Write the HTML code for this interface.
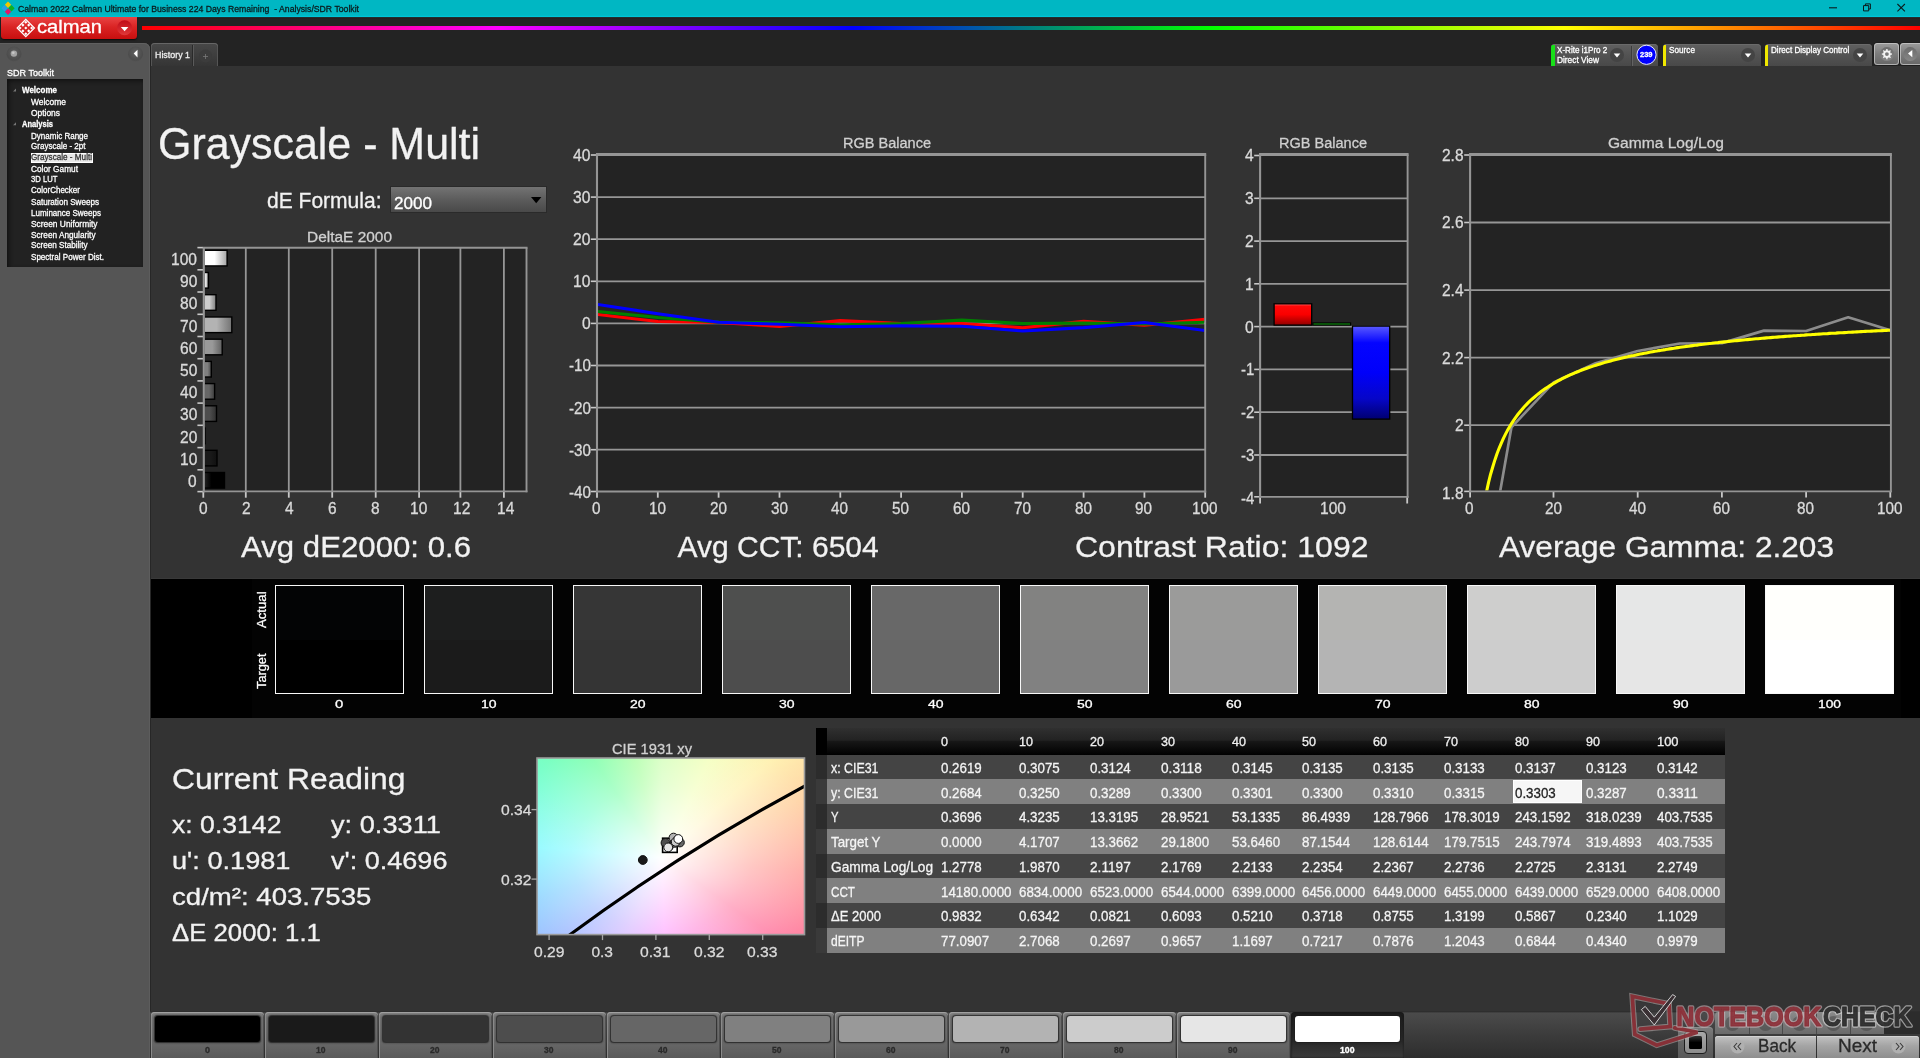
<!DOCTYPE html>
<html><head><meta charset="utf-8"><title>Calman - Grayscale Multi</title>
<style>
html,body{margin:0;padding:0;}
body{width:1920px;height:1058px;overflow:hidden;background:#232323;font-family:"Liberation Sans",sans-serif;position:relative;}
.t{position:absolute;white-space:pre;transform-origin:0 0;-webkit-text-stroke:0.3px currentColor;}
.a{position:absolute;}
svg{position:absolute;left:0;top:0;overflow:visible;}
#root{position:absolute;left:0;top:0;width:1920px;height:1058px;will-change:transform;}
</style></head><body><div id="root">
<div class="a" style="left:0;top:0;width:1920px;height:17px;background:linear-gradient(#00b7c3 0,#00b7c3 15.4px,#00c8da 16px,#00c4d6 16.6px,#0a8c98 17px);"></div>
<div class="a" style="left:0;top:17px;width:1920px;height:2px;background:linear-gradient(#1c3a3c,#291a1a 60%,#232323);"></div>
<svg width="16" height="17" viewBox="0 0 16 17">
<path d="M8 1.5 L11.2 4.7 L8 7.9 L4.8 4.7Z" fill="#f0c800"/>
<path d="M11.5 5 L14.7 8.2 L11.5 11.4 L8.3 8.2Z" fill="#10b020"/>
<path d="M4.5 5 L7.7 8.2 L4.5 11.4 L1.3 8.2Z" fill="#28a0e8"/>
<path d="M8 8.5 L11.2 11.7 L8 14.9 L4.8 11.7Z" fill="#e01868"/>
</svg>
<div class="t" style="left:18.00px;top:3.96px;font-size:9.5px;line-height:9.5px;color:#0a1a1c;transform:scaleX(0.9139);">Calman 2022 Calman Ultimate for Business 224 Days Remaining  - Analysis/SDR Toolkit</div>
<svg width="1920" height="17">
<path d="M1829 7.8 H1837" stroke="#0a1a1c" stroke-width="1.1" fill="none"/>
<path d="M1863.5 5.6 H1868.7 V10.9 H1863.5Z M1865.4 5.6 V3.9 H1870.4 V9 H1868.7" stroke="#0a1a1c" stroke-width="1" fill="none"/>
<path d="M1897.4 4 L1904.9 11.3 M1904.9 4 L1897.4 11.3" stroke="#0a1a1c" stroke-width="1.05" fill="none"/>
</svg>
<div class="a" style="left:1px;top:17px;width:136px;height:22px;border-radius:0 0 3.5px 3.5px;background:linear-gradient(#e84444,#da2424 45%,#c80f0f);box-shadow:0 1px 1.5px #0c0c0c;"></div>
<svg width="140" height="42">
<path d="M25.8 19.4 L34.4 28.0 L25.8 36.6 L17.200000000000003 28.0Z" fill="none" stroke="#fff" stroke-width="1.3" stroke-linejoin="miter"/>
<g fill="#fff">
<path d="M25.80 20.65 L27.35 22.20 L25.80 23.75 L24.25 22.20Z"/>
<path d="M22.90 23.55 L24.45 25.10 L22.90 26.65 L21.35 25.10Z"/>
<path d="M20.00 26.45 L21.55 28.00 L20.00 29.55 L18.45 28.00Z"/>
<path d="M28.70 23.55 L30.25 25.10 L28.70 26.65 L27.15 25.10Z"/>
<path d="M25.80 26.45 L27.35 28.00 L25.80 29.55 L24.25 28.00Z"/>
<path d="M22.90 29.35 L24.45 30.90 L22.90 32.45 L21.35 30.90Z"/>
<path d="M31.60 26.45 L33.15 28.00 L31.60 29.55 L30.05 28.00Z"/>
<path d="M28.70 29.35 L30.25 30.90 L28.70 32.45 L27.15 30.90Z"/>
<path d="M25.80 32.25 L27.35 33.80 L25.80 35.35 L24.25 33.80Z"/>
</g>
<defs><linearGradient id="rdd" x1="0" x2="0" y1="0" y2="1"><stop offset="0" stop-color="#c00c18"/><stop offset="1" stop-color="#e03838"/></linearGradient></defs><circle cx="124.6" cy="27.8" r="7.5" fill="url(#rdd)"/>
<path d="M120.8 26.9 H128.4 L124.6 31.2Z" fill="#fff"/>
</svg>
<div class="t" style="left:37.00px;top:17.61px;font-size:18px;line-height:18px;color:#ffffff;transform:scaleX(1.1202);">calman</div>
<div class="a" style="left:142px;top:26.3px;width:1778px;height:4.1px;background:linear-gradient(90deg,#ff0000 0%,#ff00ff 20%,#0000ff 40%,#00ff00 60%,#ffff00 80%,#ff0000 100%);"></div>
<div class="a" style="left:0;top:43px;width:150px;height:1015px;background:#555555;border-radius:0 6px 0 0;box-shadow:inset -1px 0 0 #5d5d5d, inset 0 1px 0 #606060;"></div>
<svg width="150" height="70">
<defs><radialGradient id="rb" cx="50%" cy="40%" r="60%"><stop offset="0" stop-color="#606060"/><stop offset="0.8" stop-color="#4c4c4c"/><stop offset="1" stop-color="#545454"/></radialGradient></defs>
<circle cx="14" cy="54.2" r="7.6" fill="url(#rb)"/><circle cx="13.9" cy="53.6" r="3.2" fill="#a4a4a4"/><circle cx="13.3" cy="52.8" r="1.3" fill="#c8c8c8"/>
<circle cx="135.6" cy="54.2" r="7.6" fill="url(#rb)"/><path d="M137.5 49.8 V57.4 L133.7 53.6Z" fill="#fff"/>
</svg>
<div class="t" style="left:7.00px;top:67.71px;font-size:9.6px;line-height:9.6px;color:#ffffff;transform:scaleX(0.9405);">SDR Toolkit</div>
<div class="a" style="left:7px;top:79px;width:136px;height:188px;background:#222;box-shadow:inset 2px 2px 4px #111;"></div>
<div class="t" style="left:22.00px;top:85.80px;font-size:9px;line-height:9px;color:#ffffff;font-weight:bold;transform:scaleX(0.8895);">Welcome</div>
<div class="t" style="left:31.00px;top:97.60px;font-size:9px;line-height:9px;color:#ffffff;transform:scaleX(0.9372);">Welcome</div>
<div class="t" style="left:31.00px;top:108.90px;font-size:9px;line-height:9px;color:#ffffff;transform:scaleX(0.9350);">Options</div>
<div class="t" style="left:22.00px;top:119.60px;font-size:9px;line-height:9px;color:#ffffff;font-weight:bold;transform:scaleX(0.8374);">Analysis</div>
<div class="t" style="left:31.00px;top:131.60px;font-size:9px;line-height:9px;color:#ffffff;transform:scaleX(0.8902);">Dynamic Range</div>
<div class="t" style="left:31.00px;top:142.30px;font-size:9px;line-height:9px;color:#ffffff;transform:scaleX(0.8931);">Grayscale - 2pt</div>
<div class="a" style="left:30.5px;top:152.5px;width:62.5px;height:10.5px;background:#e8e8e8;border:0.5px solid #fff;box-sizing:border-box;"></div>
<div class="t" style="left:31.00px;top:153.20px;font-size:9px;line-height:9px;color:#333;transform:scaleX(0.9035);">Grayscale - Multi</div>
<div class="t" style="left:31.00px;top:164.60px;font-size:9px;line-height:9px;color:#ffffff;transform:scaleX(0.9213);">Color Gamut</div>
<div class="t" style="left:31.00px;top:175.30px;font-size:9px;line-height:9px;color:#ffffff;transform:scaleX(0.8546);">3D LUT</div>
<div class="t" style="left:31.00px;top:186.40px;font-size:9px;line-height:9px;color:#ffffff;transform:scaleX(0.8906);">ColorChecker</div>
<div class="t" style="left:31.00px;top:197.60px;font-size:9px;line-height:9px;color:#ffffff;transform:scaleX(0.9001);">Saturation Sweeps</div>
<div class="t" style="left:31.00px;top:208.60px;font-size:9px;line-height:9px;color:#ffffff;transform:scaleX(0.8911);">Luminance Sweeps</div>
<div class="t" style="left:31.00px;top:219.60px;font-size:9px;line-height:9px;color:#ffffff;transform:scaleX(0.9298);">Screen Uniformity</div>
<div class="t" style="left:31.00px;top:230.60px;font-size:9px;line-height:9px;color:#ffffff;transform:scaleX(0.9143);">Screen Angularity</div>
<div class="t" style="left:31.00px;top:241.20px;font-size:9px;line-height:9px;color:#ffffff;transform:scaleX(0.9035);">Screen Stability</div>
<div class="t" style="left:31.00px;top:252.60px;font-size:9px;line-height:9px;color:#ffffff;transform:scaleX(0.8954);">Spectral Power Dist.</div>
<svg width="150" height="140"><path d="M16 88.5 V91.5 H13Z M16 122.3 V125.3 H13Z" fill="#777"/></svg>
<div class="a" style="left:151px;top:43px;width:67px;height:23px;border-radius:4px 4px 0 0;background:linear-gradient(#484848,#353535);box-shadow:inset 0 1px 0 #666, inset 1px 0 0 #555, inset -1px 0 0 #555;"></div>
<div class="a" style="left:193px;top:45px;width:1px;height:21px;background:#5a5a5a;"></div>
<div class="a" style="left:192px;top:45px;width:1px;height:21px;background:#2a2a2a;"></div>
<svg width="230" height="70"><circle cx="205.5" cy="56" r="6.5" fill="#3c3c3c"/><path d="M203 56.5 H208 M205.5 54 V59" stroke="#777" stroke-width="0.8"/></svg>
<div class="t" style="left:154.50px;top:51.06px;font-size:9.3px;line-height:9.3px;color:#f0f0f0;transform:scaleX(0.9539);">History 1</div>
<div class="a" style="left:150px;top:66px;width:1770px;height:992px;background:#333333;box-shadow:inset 1px 0 0 #272727;"></div>
<div class="t" style="left:158.00px;top:120.92px;font-size:45px;line-height:45px;color:#f2f2f2;transform:scaleX(0.9539);">Grayscale - Multi</div>
<div class="t" style="left:266.60px;top:190.70px;font-size:21.5px;line-height:21.5px;color:#f2f2f2;transform:scaleX(0.9778);">dE Formula:</div>
<div class="a" style="left:390.6px;top:186.9px;width:155.6px;height:25.5px;background:linear-gradient(#737373,#5c5c5c 50%,#494949);box-shadow:0 0 0 1px #2a2a2a;"></div>
<div class="t" style="left:394.30px;top:195.58px;font-size:16px;line-height:16px;color:#ffffff;transform:scaleX(1.0676);">2000</div>
<svg width="560" height="220"><path d="M531 197 H541.4 L536.2 203.3Z" fill="#000"/></svg>
<div class="t" style="left:306.50px;top:229.03px;font-size:15.5px;line-height:15.5px;color:#d0d0d0;transform:scaleX(0.9963);">DeltaE 2000</div>
<div class="t" style="left:198.50px;top:500.83px;font-size:15.7px;line-height:15.7px;color:#dadada;transform:scaleX(0.9849);">0</div>
<div class="t" style="left:241.70px;top:500.83px;font-size:15.7px;line-height:15.7px;color:#dadada;transform:scaleX(0.9849);">2</div>
<div class="t" style="left:284.90px;top:500.83px;font-size:15.7px;line-height:15.7px;color:#dadada;transform:scaleX(0.9849);">4</div>
<div class="t" style="left:328.10px;top:500.83px;font-size:15.7px;line-height:15.7px;color:#dadada;transform:scaleX(0.9849);">6</div>
<div class="t" style="left:371.30px;top:500.83px;font-size:15.7px;line-height:15.7px;color:#dadada;transform:scaleX(0.9849);">8</div>
<div class="t" style="left:410.15px;top:500.83px;font-size:15.7px;line-height:15.7px;color:#dadada;transform:scaleX(0.9906);">10</div>
<div class="t" style="left:453.35px;top:500.83px;font-size:15.7px;line-height:15.7px;color:#dadada;transform:scaleX(0.9906);">12</div>
<div class="t" style="left:496.55px;top:500.83px;font-size:15.7px;line-height:15.7px;color:#dadada;transform:scaleX(0.9906);">14</div>
<div class="t" style="left:171.00px;top:251.94px;font-size:15.7px;line-height:15.7px;color:#dadada;transform:scaleX(0.9925);">100</div>
<div class="t" style="left:179.70px;top:274.16px;font-size:15.7px;line-height:15.7px;color:#dadada;transform:scaleX(0.9906);">90</div>
<div class="t" style="left:179.70px;top:296.38px;font-size:15.7px;line-height:15.7px;color:#dadada;transform:scaleX(0.9906);">80</div>
<div class="t" style="left:179.70px;top:318.59px;font-size:15.7px;line-height:15.7px;color:#dadada;transform:scaleX(0.9906);">70</div>
<div class="t" style="left:179.70px;top:340.81px;font-size:15.7px;line-height:15.7px;color:#dadada;transform:scaleX(0.9906);">60</div>
<div class="t" style="left:179.70px;top:363.03px;font-size:15.7px;line-height:15.7px;color:#dadada;transform:scaleX(0.9906);">50</div>
<div class="t" style="left:179.70px;top:385.25px;font-size:15.7px;line-height:15.7px;color:#dadada;transform:scaleX(0.9906);">40</div>
<div class="t" style="left:179.70px;top:407.47px;font-size:15.7px;line-height:15.7px;color:#dadada;transform:scaleX(0.9906);">30</div>
<div class="t" style="left:179.70px;top:429.69px;font-size:15.7px;line-height:15.7px;color:#dadada;transform:scaleX(0.9906);">20</div>
<div class="t" style="left:179.70px;top:451.90px;font-size:15.7px;line-height:15.7px;color:#dadada;transform:scaleX(0.9906);">10</div>
<div class="t" style="left:188.40px;top:474.12px;font-size:15.7px;line-height:15.7px;color:#dadada;transform:scaleX(0.9849);">0</div>
<div class="t" style="left:842.50px;top:135.43px;font-size:15.5px;line-height:15.5px;color:#d0d0d0;transform:scaleX(0.9371);">RGB Balance</div>
<div class="t" style="left:573.30px;top:147.93px;font-size:15.7px;line-height:15.7px;color:#dadada;transform:scaleX(0.9963);">40</div>
<div class="t" style="left:573.30px;top:190.03px;font-size:15.7px;line-height:15.7px;color:#dadada;transform:scaleX(0.9963);">30</div>
<div class="t" style="left:573.30px;top:232.13px;font-size:15.7px;line-height:15.7px;color:#dadada;transform:scaleX(0.9963);">20</div>
<div class="t" style="left:573.30px;top:274.23px;font-size:15.7px;line-height:15.7px;color:#dadada;transform:scaleX(0.9963);">10</div>
<div class="t" style="left:582.00px;top:316.33px;font-size:15.7px;line-height:15.7px;color:#dadada;transform:scaleX(0.9963);">0</div>
<div class="t" style="left:568.70px;top:358.43px;font-size:15.7px;line-height:15.7px;color:#dadada;transform:scaleX(0.9695);">-10</div>
<div class="t" style="left:568.70px;top:400.53px;font-size:15.7px;line-height:15.7px;color:#dadada;transform:scaleX(0.9695);">-20</div>
<div class="t" style="left:568.70px;top:442.63px;font-size:15.7px;line-height:15.7px;color:#dadada;transform:scaleX(0.9695);">-30</div>
<div class="t" style="left:568.70px;top:484.73px;font-size:15.7px;line-height:15.7px;color:#dadada;transform:scaleX(0.9695);">-40</div>
<div class="t" style="left:592.35px;top:500.83px;font-size:15.7px;line-height:15.7px;color:#dadada;transform:scaleX(0.9734);">0</div>
<div class="t" style="left:648.92px;top:500.83px;font-size:15.7px;line-height:15.7px;color:#dadada;transform:scaleX(0.9734);">10</div>
<div class="t" style="left:709.74px;top:500.83px;font-size:15.7px;line-height:15.7px;color:#dadada;transform:scaleX(0.9734);">20</div>
<div class="t" style="left:770.56px;top:500.83px;font-size:15.7px;line-height:15.7px;color:#dadada;transform:scaleX(0.9734);">30</div>
<div class="t" style="left:831.38px;top:500.83px;font-size:15.7px;line-height:15.7px;color:#dadada;transform:scaleX(0.9734);">40</div>
<div class="t" style="left:892.20px;top:500.83px;font-size:15.7px;line-height:15.7px;color:#dadada;transform:scaleX(0.9734);">50</div>
<div class="t" style="left:953.02px;top:500.83px;font-size:15.7px;line-height:15.7px;color:#dadada;transform:scaleX(0.9734);">60</div>
<div class="t" style="left:1013.84px;top:500.83px;font-size:15.7px;line-height:15.7px;color:#dadada;transform:scaleX(0.9734);">70</div>
<div class="t" style="left:1074.66px;top:500.83px;font-size:15.7px;line-height:15.7px;color:#dadada;transform:scaleX(0.9734);">80</div>
<div class="t" style="left:1135.48px;top:500.83px;font-size:15.7px;line-height:15.7px;color:#dadada;transform:scaleX(0.9734);">90</div>
<div class="t" style="left:1192.05px;top:500.83px;font-size:15.7px;line-height:15.7px;color:#dadada;transform:scaleX(0.9734);">100</div>
<div class="t" style="left:1279.00px;top:135.43px;font-size:15.5px;line-height:15.5px;color:#d0d0d0;transform:scaleX(0.9371);">RGB Balance</div>
<div class="t" style="left:1245.10px;top:148.43px;font-size:15.7px;line-height:15.7px;color:#dadada;transform:scaleX(0.9963);">4</div>
<div class="t" style="left:1245.10px;top:191.21px;font-size:15.7px;line-height:15.7px;color:#dadada;transform:scaleX(0.9963);">3</div>
<div class="t" style="left:1245.10px;top:233.99px;font-size:15.7px;line-height:15.7px;color:#dadada;transform:scaleX(0.9963);">2</div>
<div class="t" style="left:1245.10px;top:276.77px;font-size:15.7px;line-height:15.7px;color:#dadada;transform:scaleX(0.9963);">1</div>
<div class="t" style="left:1245.10px;top:319.55px;font-size:15.7px;line-height:15.7px;color:#dadada;transform:scaleX(0.9963);">0</div>
<div class="t" style="left:1240.50px;top:362.33px;font-size:15.7px;line-height:15.7px;color:#dadada;transform:scaleX(0.9527);">-1</div>
<div class="t" style="left:1240.50px;top:405.11px;font-size:15.7px;line-height:15.7px;color:#dadada;transform:scaleX(0.9527);">-2</div>
<div class="t" style="left:1240.50px;top:447.89px;font-size:15.7px;line-height:15.7px;color:#dadada;transform:scaleX(0.9527);">-3</div>
<div class="t" style="left:1240.50px;top:490.67px;font-size:15.7px;line-height:15.7px;color:#dadada;transform:scaleX(0.9527);">-4</div>
<div class="t" style="left:1320.00px;top:500.83px;font-size:15.7px;line-height:15.7px;color:#dadada;transform:scaleX(0.9925);">100</div>
<div class="t" style="left:1607.50px;top:135.43px;font-size:15.5px;line-height:15.5px;color:#d0d0d0;transform:scaleX(1.0047);">Gamma Log/Log</div>
<div class="t" style="left:1441.70px;top:147.93px;font-size:15.7px;line-height:15.7px;color:#dadada;transform:scaleX(0.9851);">2.8</div>
<div class="t" style="left:1441.70px;top:215.48px;font-size:15.7px;line-height:15.7px;color:#dadada;transform:scaleX(0.9851);">2.6</div>
<div class="t" style="left:1441.70px;top:283.03px;font-size:15.7px;line-height:15.7px;color:#dadada;transform:scaleX(0.9851);">2.4</div>
<div class="t" style="left:1441.70px;top:350.58px;font-size:15.7px;line-height:15.7px;color:#dadada;transform:scaleX(0.9851);">2.2</div>
<div class="t" style="left:1454.50px;top:418.13px;font-size:15.7px;line-height:15.7px;color:#dadada;transform:scaleX(0.9963);">2</div>
<div class="t" style="left:1441.70px;top:485.68px;font-size:15.7px;line-height:15.7px;color:#dadada;transform:scaleX(0.9851);">1.8</div>
<div class="t" style="left:1464.75px;top:500.83px;font-size:15.7px;line-height:15.7px;color:#dadada;transform:scaleX(0.9734);">0</div>
<div class="t" style="left:1544.70px;top:500.83px;font-size:15.7px;line-height:15.7px;color:#dadada;transform:scaleX(0.9734);">20</div>
<div class="t" style="left:1628.90px;top:500.83px;font-size:15.7px;line-height:15.7px;color:#dadada;transform:scaleX(0.9734);">40</div>
<div class="t" style="left:1713.10px;top:500.83px;font-size:15.7px;line-height:15.7px;color:#dadada;transform:scaleX(0.9734);">60</div>
<div class="t" style="left:1797.30px;top:500.83px;font-size:15.7px;line-height:15.7px;color:#dadada;transform:scaleX(0.9734);">80</div>
<div class="t" style="left:1877.25px;top:500.83px;font-size:15.7px;line-height:15.7px;color:#dadada;transform:scaleX(0.9734);">100</div>
<svg width="1920" height="1058"><rect x="203.8" y="247.7" width="322.7" height="243.7" fill="#232323"/>
<path d="M245.8 247.7 V491.4" stroke="#969696" stroke-width="1.8"/>
<path d="M288.8 247.7 V491.4" stroke="#969696" stroke-width="1.8"/>
<path d="M332.2 247.7 V491.4" stroke="#969696" stroke-width="1.8"/>
<path d="M375.7 247.7 V491.4" stroke="#969696" stroke-width="1.8"/>
<path d="M419.1 247.7 V491.4" stroke="#969696" stroke-width="1.8"/>
<path d="M460.4 247.7 V491.4" stroke="#969696" stroke-width="1.8"/>
<path d="M503.9 247.7 V491.4" stroke="#969696" stroke-width="1.8"/>
<path d="M203.3 491.4 V497.7" stroke="#c8c8c8" stroke-width="1.8"/>
<path d="M245.8 491.4 V497.7" stroke="#c8c8c8" stroke-width="1.8"/>
<path d="M288.8 491.4 V497.7" stroke="#c8c8c8" stroke-width="1.8"/>
<path d="M332.2 491.4 V497.7" stroke="#c8c8c8" stroke-width="1.8"/>
<path d="M375.7 491.4 V497.7" stroke="#c8c8c8" stroke-width="1.8"/>
<path d="M419.1 491.4 V497.7" stroke="#c8c8c8" stroke-width="1.8"/>
<path d="M460.4 491.4 V497.7" stroke="#c8c8c8" stroke-width="1.8"/>
<path d="M503.9 491.4 V497.7" stroke="#c8c8c8" stroke-width="1.8"/>
<defs>
<linearGradient id="bg0" x1="0" x2="1" y1="0" y2="0"><stop offset="0" stop-color="#202020"/><stop offset="0.35" stop-color="#000"/><stop offset="1" stop-color="#000"/></linearGradient>
<linearGradient id="bg10" x1="0" x2="1" y1="0" y2="0"><stop offset="0" stop-color="rgb(26,26,26)"/><stop offset="0.45" stop-color="rgb(26,26,26)"/><stop offset="1" stop-color="rgb(17,17,17)"/></linearGradient>
<linearGradient id="bg20" x1="0" x2="1" y1="0" y2="0"><stop offset="0" stop-color="rgb(51,51,51)"/><stop offset="0.45" stop-color="rgb(51,51,51)"/><stop offset="1" stop-color="rgb(33,33,33)"/></linearGradient>
<linearGradient id="bg30" x1="0" x2="1" y1="0" y2="0"><stop offset="0" stop-color="rgb(77,77,77)"/><stop offset="0.45" stop-color="rgb(77,77,77)"/><stop offset="1" stop-color="rgb(50,50,50)"/></linearGradient>
<linearGradient id="bg40" x1="0" x2="1" y1="0" y2="0"><stop offset="0" stop-color="rgb(102,102,102)"/><stop offset="0.45" stop-color="rgb(102,102,102)"/><stop offset="1" stop-color="rgb(67,67,67)"/></linearGradient>
<linearGradient id="bg50" x1="0" x2="1" y1="0" y2="0"><stop offset="0" stop-color="rgb(128,128,128)"/><stop offset="0.45" stop-color="rgb(128,128,128)"/><stop offset="1" stop-color="rgb(84,84,84)"/></linearGradient>
<linearGradient id="bg60" x1="0" x2="1" y1="0" y2="0"><stop offset="0" stop-color="rgb(153,153,153)"/><stop offset="0.45" stop-color="rgb(153,153,153)"/><stop offset="1" stop-color="rgb(100,100,100)"/></linearGradient>
<linearGradient id="bg70" x1="0" x2="1" y1="0" y2="0"><stop offset="0" stop-color="rgb(179,179,179)"/><stop offset="0.45" stop-color="rgb(179,179,179)"/><stop offset="1" stop-color="rgb(118,118,118)"/></linearGradient>
<linearGradient id="bg80" x1="0" x2="1" y1="0" y2="0"><stop offset="0" stop-color="rgb(204,204,204)"/><stop offset="0.45" stop-color="rgb(204,204,204)"/><stop offset="1" stop-color="rgb(134,134,134)"/></linearGradient>
<linearGradient id="bg90" x1="0" x2="1" y1="0" y2="0"><stop offset="0" stop-color="rgb(230,230,230)"/><stop offset="0.45" stop-color="rgb(230,230,230)"/><stop offset="1" stop-color="rgb(151,151,151)"/></linearGradient>
<linearGradient id="bg100" x1="0" x2="1" y1="0" y2="0"><stop offset="0" stop-color="rgb(255,255,255)"/><stop offset="0.45" stop-color="rgb(255,255,255)"/><stop offset="1" stop-color="rgb(168,168,168)"/></linearGradient>
</defs>
<path d="M197.4 247.6 H203" stroke="#c8c8c8" stroke-width="1.6"/>
<rect x="204.8" y="249.6" width="23.0" height="17" fill="#000"/>
<rect x="204.8" y="251.0" width="21.6" height="14.2" fill="url(#bg100)"/>
<path d="M197.4 269.8 H203" stroke="#c8c8c8" stroke-width="1.6"/>
<rect x="204.8" y="271.8" width="4.3" height="17" fill="#000"/>
<rect x="204.8" y="273.2" width="2.9" height="14.2" fill="url(#bg90)"/>
<path d="M197.4 292.0 H203" stroke="#c8c8c8" stroke-width="1.6"/>
<rect x="204.8" y="294.0" width="11.9" height="17" fill="#000"/>
<rect x="204.8" y="295.4" width="10.5" height="14.2" fill="url(#bg80)"/>
<path d="M197.4 314.3 H203" stroke="#c8c8c8" stroke-width="1.6"/>
<rect x="204.8" y="316.3" width="27.7" height="17" fill="#000"/>
<rect x="204.8" y="317.7" width="26.3" height="14.2" fill="url(#bg70)"/>
<path d="M197.4 336.5 H203" stroke="#c8c8c8" stroke-width="1.6"/>
<rect x="204.8" y="338.5" width="18.1" height="17" fill="#000"/>
<rect x="204.8" y="339.9" width="16.7" height="14.2" fill="url(#bg60)"/>
<path d="M197.4 358.7 H203" stroke="#c8c8c8" stroke-width="1.6"/>
<rect x="204.8" y="360.7" width="7.2" height="17" fill="#000"/>
<rect x="204.8" y="362.1" width="5.8" height="14.2" fill="url(#bg50)"/>
<path d="M197.4 380.9 H203" stroke="#c8c8c8" stroke-width="1.6"/>
<rect x="204.8" y="382.9" width="10.5" height="17" fill="#000"/>
<rect x="204.8" y="384.3" width="9.1" height="14.2" fill="url(#bg40)"/>
<path d="M197.4 403.1 H203" stroke="#c8c8c8" stroke-width="1.6"/>
<rect x="204.8" y="405.1" width="12.4" height="17" fill="#000"/>
<rect x="204.8" y="406.5" width="11.0" height="14.2" fill="url(#bg30)"/>
<path d="M197.4 425.3 H203" stroke="#c8c8c8" stroke-width="1.6"/>
<rect x="204.8" y="427.4" width="1.0" height="17" fill="#000"/>
<rect x="204.8" y="428.8" width="0.3" height="14.2" fill="url(#bg20)"/>
<path d="M197.4 447.6 H203" stroke="#c8c8c8" stroke-width="1.6"/>
<rect x="204.8" y="449.6" width="12.9" height="17" fill="#000"/>
<rect x="204.8" y="451.0" width="11.5" height="14.2" fill="url(#bg10)"/>
<path d="M197.4 469.8 H203" stroke="#c8c8c8" stroke-width="1.6"/>
<rect x="204.8" y="471.8" width="20.4" height="17" fill="#000"/>
<rect x="204.8" y="473.2" width="19.0" height="14.2" fill="url(#bg0)"/>
<path d="M197.4 491.6 H203" stroke="#c8c8c8" stroke-width="1.6"/>
<path d="M203.8 247.70 V492.29999999999995" stroke="#959595" stroke-width="2.1"/>
<path d="M202.75 247.7 H527.5" stroke="#959595" stroke-width="2.0"/>
<path d="M526.5 247.7 V492.29999999999995" stroke="#959595" stroke-width="1.9"/>
<path d="M202.75 491.4 H527.45" stroke="#959595" stroke-width="1.8"/>
<rect x="597.0" y="154.6" width="608.2" height="336.9" fill="#232323"/>
<path d="M590.8 155.0 H597.0" stroke="#c8c8c8" stroke-width="1.6"/>
<path d="M597.0 197.1 H1205.2" stroke="#969696" stroke-width="1.8"/>
<path d="M590.8 197.1 H597.0" stroke="#c8c8c8" stroke-width="1.6"/>
<path d="M597.0 239.2 H1205.2" stroke="#969696" stroke-width="1.8"/>
<path d="M590.8 239.2 H597.0" stroke="#c8c8c8" stroke-width="1.6"/>
<path d="M597.0 281.3 H1205.2" stroke="#969696" stroke-width="1.8"/>
<path d="M590.8 281.3 H597.0" stroke="#c8c8c8" stroke-width="1.6"/>
<path d="M597.0 323.4 H1205.2" stroke="#969696" stroke-width="1.8"/>
<path d="M590.8 323.4 H597.0" stroke="#c8c8c8" stroke-width="1.6"/>
<path d="M597.0 365.5 H1205.2" stroke="#969696" stroke-width="1.8"/>
<path d="M590.8 365.5 H597.0" stroke="#c8c8c8" stroke-width="1.6"/>
<path d="M597.0 407.6 H1205.2" stroke="#969696" stroke-width="1.8"/>
<path d="M590.8 407.6 H597.0" stroke="#c8c8c8" stroke-width="1.6"/>
<path d="M597.0 449.7 H1205.2" stroke="#969696" stroke-width="1.8"/>
<path d="M590.8 449.7 H597.0" stroke="#c8c8c8" stroke-width="1.6"/>
<path d="M590.8 491.5 H597.0" stroke="#c8c8c8" stroke-width="1.6"/>
<path d="M597.0 491.5 V497.7" stroke="#c8c8c8" stroke-width="1.8"/>
<path d="M657.8 491.5 V497.7" stroke="#c8c8c8" stroke-width="1.8"/>
<path d="M718.6 491.5 V497.7" stroke="#c8c8c8" stroke-width="1.8"/>
<path d="M779.5 491.5 V497.7" stroke="#c8c8c8" stroke-width="1.8"/>
<path d="M840.3 491.5 V497.7" stroke="#c8c8c8" stroke-width="1.8"/>
<path d="M901.1 491.5 V497.7" stroke="#c8c8c8" stroke-width="1.8"/>
<path d="M961.9 491.5 V497.7" stroke="#c8c8c8" stroke-width="1.8"/>
<path d="M1022.7 491.5 V497.7" stroke="#c8c8c8" stroke-width="1.8"/>
<path d="M1083.6 491.5 V497.7" stroke="#c8c8c8" stroke-width="1.8"/>
<path d="M1144.4 491.5 V497.7" stroke="#c8c8c8" stroke-width="1.8"/>
<path d="M1205.2 491.5 V497.7" stroke="#c8c8c8" stroke-width="1.8"/>
<clipPath id="cp2"><rect x="598.0" y="154.6" width="606.3000000000001" height="336.9"/></clipPath>
<polyline points="597.0,314.4 657.8,321.5 718.6,322.5 779.5,326.5 840.3,320.6 901.1,323.5 961.9,323.5 1022.7,327.8 1083.6,321.4 1144.4,325.2 1205.2,319.3" fill="none" stroke="#ff0000" stroke-width="3.1" stroke-linejoin="round" clip-path="url(#cp2)"/>
<polyline points="597.0,311.4 657.8,317.5 718.6,322.1 779.5,322.7 840.3,324.8 901.1,323.5 961.9,320.1 1022.7,323.5 1083.6,323.1 1144.4,324.0 1205.2,322.3" fill="none" stroke="#008000" stroke-width="3.1" stroke-linejoin="round" clip-path="url(#cp2)"/>
<polyline points="597.0,304.3 657.8,313.7 718.6,322.3 779.5,324.2 840.3,326.7 901.1,325.9 961.9,326.3 1022.7,331.0 1083.6,327.6 1144.4,322.5 1205.2,330.5" fill="none" stroke="#0000ff" stroke-width="3.1" stroke-linejoin="round" clip-path="url(#cp2)"/>
<path d="M597.0 154.10 V492.4" stroke="#959595" stroke-width="2.1"/>
<path d="M595.95 154.6 H1206.2" stroke="#959595" stroke-width="3.0"/>
<path d="M1205.2 154.6 V492.4" stroke="#959595" stroke-width="1.9"/>
<path d="M595.95 491.5 H1206.15" stroke="#959595" stroke-width="1.8"/>
<rect x="1260.1" y="154.6" width="147.5" height="342.20000000000005" fill="#232323"/>
<path d="M1254.2 155.5 H1260.1" stroke="#c8c8c8" stroke-width="1.6"/>
<path d="M1260.1 198.3 H1407.6" stroke="#969696" stroke-width="1.8"/>
<path d="M1254.2 198.3 H1260.1" stroke="#c8c8c8" stroke-width="1.6"/>
<path d="M1260.1 241.1 H1407.6" stroke="#969696" stroke-width="1.8"/>
<path d="M1254.2 241.1 H1260.1" stroke="#c8c8c8" stroke-width="1.6"/>
<path d="M1260.1 283.8 H1407.6" stroke="#969696" stroke-width="1.8"/>
<path d="M1254.2 283.8 H1260.1" stroke="#c8c8c8" stroke-width="1.6"/>
<path d="M1260.1 326.6 H1407.6" stroke="#969696" stroke-width="1.8"/>
<path d="M1254.2 326.6 H1260.1" stroke="#c8c8c8" stroke-width="1.6"/>
<path d="M1260.1 369.4 H1407.6" stroke="#969696" stroke-width="1.8"/>
<path d="M1254.2 369.4 H1260.1" stroke="#c8c8c8" stroke-width="1.6"/>
<path d="M1260.1 412.2 H1407.6" stroke="#969696" stroke-width="1.8"/>
<path d="M1254.2 412.2 H1260.1" stroke="#c8c8c8" stroke-width="1.6"/>
<path d="M1260.1 455.0 H1407.6" stroke="#969696" stroke-width="1.8"/>
<path d="M1254.2 455.0 H1260.1" stroke="#c8c8c8" stroke-width="1.6"/>
<path d="M1254.2 496.8 H1260.1" stroke="#c8c8c8" stroke-width="1.6"/>
<path d="M1260.1 496.8 V503.4 M1407.1999999999998 496.8 V503.4" stroke="#c8c8c8" stroke-width="1.8"/>
<defs>
<linearGradient id="br" x1="0" x2="0" y1="0" y2="1"><stop offset="0" stop-color="#ff5a5a"/><stop offset="0.12" stop-color="#ff0808"/><stop offset="0.5" stop-color="#fa0000"/><stop offset="1" stop-color="#900000"/></linearGradient>
<linearGradient id="bb" x1="0" x2="0" y1="0" y2="1"><stop offset="0" stop-color="#5a5aff"/><stop offset="0.18" stop-color="#0404ff"/><stop offset="0.5" stop-color="#0000fa"/><stop offset="0.78" stop-color="#0606c8"/><stop offset="1" stop-color="#000070"/></linearGradient>
</defs>
<rect x="1274.1" y="303.8" width="37.6" height="21.3" fill="url(#br)" stroke="#000" stroke-width="1.3"/>
<rect x="1312.9" y="322.9" width="37.7" height="2.2" fill="#109410" stroke="#000" stroke-width="1.1"/>
<rect x="1352.5" y="326.1" width="37.2" height="93" fill="url(#bb)" stroke="#000" stroke-width="1.3"/>
<path d="M1260.1 154.10 V497.7" stroke="#959595" stroke-width="2.1"/>
<path d="M1259.05 154.6 H1408.6" stroke="#959595" stroke-width="3.0"/>
<path d="M1407.6 154.6 V497.7" stroke="#959595" stroke-width="1.9"/>
<path d="M1259.05 496.8 H1408.55" stroke="#959595" stroke-width="1.8"/>
<rect x="1470.1" y="154.6" width="420.8000000000002" height="336.79999999999995" fill="#232323"/>
<path d="M1464.2 155.0 H1470.1" stroke="#c8c8c8" stroke-width="1.6"/>
<path d="M1470.1 222.5 H1890.9" stroke="#969696" stroke-width="1.8"/>
<path d="M1464.2 222.5 H1470.1" stroke="#c8c8c8" stroke-width="1.6"/>
<path d="M1470.1 290.1 H1890.9" stroke="#969696" stroke-width="1.8"/>
<path d="M1464.2 290.1 H1470.1" stroke="#c8c8c8" stroke-width="1.6"/>
<path d="M1470.1 357.6 H1890.9" stroke="#969696" stroke-width="1.8"/>
<path d="M1464.2 357.6 H1470.1" stroke="#c8c8c8" stroke-width="1.6"/>
<path d="M1470.1 425.2 H1890.9" stroke="#969696" stroke-width="1.8"/>
<path d="M1464.2 425.2 H1470.1" stroke="#c8c8c8" stroke-width="1.6"/>
<path d="M1464.2 491.4 H1470.1" stroke="#c8c8c8" stroke-width="1.6"/>
<path d="M1470.1 491.4 V497.59999999999997" stroke="#c8c8c8" stroke-width="1.8"/>
<path d="M1553.5 491.4 V497.59999999999997" stroke="#c8c8c8" stroke-width="1.8"/>
<path d="M1637.7 491.4 V497.59999999999997" stroke="#c8c8c8" stroke-width="1.8"/>
<path d="M1721.9 491.4 V497.59999999999997" stroke="#c8c8c8" stroke-width="1.8"/>
<path d="M1806.1 491.4 V497.59999999999997" stroke="#c8c8c8" stroke-width="1.8"/>
<path d="M1890.3 491.4 V497.59999999999997" stroke="#c8c8c8" stroke-width="1.8"/>
<clipPath id="cp4"><rect x="1471.1" y="154.6" width="418.9000000000002" height="335.99999999999994"/></clipPath>
<polyline points="1469.3,666.9 1511.4,427.4 1553.5,382.6 1595.6,363.3 1637.7,351.0 1679.8,343.5 1721.9,343.1 1764.0,330.6 1806.1,331.0 1848.2,317.3 1890.3,330.2" fill="none" stroke="#8c8c8c" stroke-width="2.7" stroke-linejoin="round" clip-path="url(#cp4)"/>
<polyline points="1478.0,539.8 1480.1,526.5 1482.2,514.3 1484.3,503.0 1486.4,492.3 1488.5,482.6 1490.6,474.2 1492.8,466.7 1494.9,459.9 1497.0,453.8 1499.1,448.3 1501.2,443.3 1503.3,438.6 1505.4,434.4 1507.5,430.4 1509.6,426.8 1511.7,423.3 1513.8,420.1 1515.9,417.1 1518.0,414.3 1520.1,411.7 1522.2,409.2 1524.3,406.8 1526.4,404.6 1528.5,402.4 1530.6,400.4 1532.8,398.5 1534.9,396.7 1537.0,394.9 1539.1,393.2 1541.2,391.6 1543.3,390.1 1545.4,388.6 1547.5,387.2 1549.6,385.9 1551.7,384.6 1553.8,383.3 1555.9,382.1 1558.0,380.9 1560.1,379.8 1562.2,378.7 1564.3,377.6 1566.4,376.6 1568.5,375.6 1570.6,374.7 1572.7,373.8 1574.8,372.9 1577.0,372.0 1579.1,371.2 1581.2,370.3 1583.3,369.5 1585.4,368.8 1587.5,368.0 1589.6,367.3 1591.7,366.6 1593.8,365.9 1595.9,365.2 1598.0,364.5 1600.1,363.9 1602.2,363.3 1604.3,362.6 1606.4,362.0 1608.5,361.5 1610.6,360.9 1612.7,360.3 1614.8,359.8 1616.9,359.3 1619.1,358.7 1621.2,358.2 1623.3,357.7 1625.4,357.2 1627.5,356.8 1629.6,356.3 1631.7,355.8 1633.8,355.4 1635.9,354.9 1638.0,354.5 1640.1,354.1 1642.2,353.7 1644.3,353.3 1646.4,352.9 1648.5,352.5 1650.6,352.1 1652.7,351.7 1654.8,351.3 1656.9,351.0 1659.0,350.6 1661.2,350.3 1663.3,349.9 1665.4,349.6 1667.5,349.2 1669.6,348.9 1671.7,348.6 1673.8,348.3 1675.9,347.9 1678.0,347.6 1680.1,347.3 1682.2,347.0 1684.3,346.7 1686.4,346.4 1688.5,346.2 1690.6,345.9 1692.7,345.6 1694.8,345.3 1696.9,345.1 1699.0,344.8 1701.1,344.5 1703.3,344.3 1705.4,344.0 1707.5,343.8 1709.6,343.5 1711.7,343.3 1713.8,343.0 1715.9,342.8 1718.0,342.6 1720.1,342.3 1722.2,342.1 1724.3,341.9 1726.4,341.7 1728.5,341.4 1730.6,341.2 1732.7,341.0 1734.8,340.8 1736.9,340.6 1739.0,340.4 1741.1,340.2 1743.2,340.0 1745.4,339.8 1747.5,339.6 1749.6,339.4 1751.7,339.2 1753.8,339.0 1755.9,338.8 1758.0,338.7 1760.1,338.5 1762.2,338.3 1764.3,338.1 1766.4,337.9 1768.5,337.8 1770.6,337.6 1772.7,337.4 1774.8,337.3 1776.9,337.1 1779.0,336.9 1781.1,336.8 1783.2,336.6 1785.3,336.4 1787.5,336.3 1789.6,336.1 1791.7,336.0 1793.8,335.8 1795.9,335.7 1798.0,335.5 1800.1,335.4 1802.2,335.2 1804.3,335.1 1806.4,334.9 1808.5,334.8 1810.6,334.7 1812.7,334.5 1814.8,334.4 1816.9,334.2 1819.0,334.1 1821.1,334.0 1823.2,333.8 1825.3,333.7 1827.5,333.6 1829.6,333.4 1831.7,333.3 1833.8,333.2 1835.9,333.1 1838.0,332.9 1840.1,332.8 1842.2,332.7 1844.3,332.6 1846.4,332.5 1848.5,332.3 1850.6,332.2 1852.7,332.1 1854.8,332.0 1856.9,331.9 1859.0,331.8 1861.1,331.6 1863.2,331.5 1865.3,331.4 1867.4,331.3 1869.5,331.2 1871.7,331.1 1873.8,331.0 1875.9,330.9 1878.0,330.8 1880.1,330.7 1882.2,330.6 1884.3,330.5 1886.4,330.4 1888.5,330.3 1890.3,330.2" fill="none" stroke="#ffff00" stroke-width="3.1" stroke-linejoin="round" clip-path="url(#cp4)"/>
<path d="M1470.1 154.10 V492.29999999999995" stroke="#959595" stroke-width="2.1"/>
<path d="M1469.05 154.6 H1891.9" stroke="#959595" stroke-width="3.0"/>
<path d="M1890.9 154.6 V492.29999999999995" stroke="#959595" stroke-width="1.9"/>
<path d="M1469.05 491.4 H1891.8500000000001" stroke="#959595" stroke-width="1.8"/></svg>
<div class="t" style="left:241.20px;top:532.25px;font-size:30px;line-height:30px;color:#f2f2f2;transform:scaleX(1.0393);">Avg dE2000: 0.6</div>
<div class="t" style="left:677.50px;top:532.25px;font-size:30px;line-height:30px;color:#f2f2f2;">Avg CCT: 6504</div>
<div class="t" style="left:1074.60px;top:532.25px;font-size:30px;line-height:30px;color:#f2f2f2;transform:scaleX(1.0666);">Contrast Ratio: 1092</div>
<div class="t" style="left:1499.20px;top:532.25px;font-size:30px;line-height:30px;color:#f2f2f2;transform:scaleX(1.0536);">Average Gamma: 2.203</div>
<div class="a" style="left:151px;top:578px;width:1769px;height:1px;background:#393939;"></div>
<div class="a" style="left:150.6px;top:579px;width:1770px;height:139.3px;background:#000;"></div>
<div class="a" style="left:251.5px;top:579px;width:1649px;height:139.3px;background:#030303;"></div>
<div class="a" style="left:275px;top:585px;width:128.8px;height:109px;box-sizing:border-box;border:1.9px solid #f8f8f8;background:linear-gradient(#030405 0,#030405 50%,#000000 50%,#000000 100%);"></div>
<div class="t" style="left:335.25px;top:698.84px;font-size:11.8px;line-height:11.8px;color:#ffffff;transform:scaleX(1.2647);">0</div>
<div class="a" style="left:424px;top:585px;width:128.8px;height:109px;box-sizing:border-box;border:1.9px solid #f8f8f8;background:linear-gradient(#1d1e1e 0,#1d1e1e 50%,#1b1b1b 50%,#1b1b1b 100%);"></div>
<div class="t" style="left:480.60px;top:698.84px;font-size:11.8px;line-height:11.8px;color:#ffffff;transform:scaleX(1.1885);">10</div>
<div class="a" style="left:573px;top:585px;width:128.8px;height:109px;box-sizing:border-box;border:1.9px solid #f8f8f8;background:linear-gradient(#363636 0,#363636 50%,#343434 50%,#343434 100%);"></div>
<div class="t" style="left:629.60px;top:698.84px;font-size:11.8px;line-height:11.8px;color:#ffffff;transform:scaleX(1.1885);">20</div>
<div class="a" style="left:722px;top:585px;width:128.8px;height:109px;box-sizing:border-box;border:1.9px solid #f8f8f8;background:linear-gradient(#4e4f4e 0,#4e4f4e 50%,#4d4d4d 50%,#4d4d4d 100%);"></div>
<div class="t" style="left:778.60px;top:698.84px;font-size:11.8px;line-height:11.8px;color:#ffffff;transform:scaleX(1.1885);">30</div>
<div class="a" style="left:871px;top:585px;width:128.8px;height:109px;box-sizing:border-box;border:1.9px solid #f8f8f8;background:linear-gradient(#686868 0,#686868 50%,#676767 50%,#676767 100%);"></div>
<div class="t" style="left:927.60px;top:698.84px;font-size:11.8px;line-height:11.8px;color:#ffffff;transform:scaleX(1.1885);">40</div>
<div class="a" style="left:1020px;top:585px;width:128.8px;height:109px;box-sizing:border-box;border:1.9px solid #f8f8f8;background:linear-gradient(#828281 0,#828281 50%,#818181 50%,#818181 100%);"></div>
<div class="t" style="left:1076.60px;top:698.84px;font-size:11.8px;line-height:11.8px;color:#ffffff;transform:scaleX(1.1885);">50</div>
<div class="a" style="left:1169px;top:585px;width:128.8px;height:109px;box-sizing:border-box;border:1.9px solid #f8f8f8;background:linear-gradient(#9b9b9a 0,#9b9b9a 50%,#9a9a9a 50%,#9a9a9a 100%);"></div>
<div class="t" style="left:1225.60px;top:698.84px;font-size:11.8px;line-height:11.8px;color:#ffffff;transform:scaleX(1.1885);">60</div>
<div class="a" style="left:1318px;top:585px;width:128.8px;height:109px;box-sizing:border-box;border:1.9px solid #f8f8f8;background:linear-gradient(#b4b4b2 0,#b4b4b2 50%,#b4b4b4 50%,#b4b4b4 100%);"></div>
<div class="t" style="left:1374.60px;top:698.84px;font-size:11.8px;line-height:11.8px;color:#ffffff;transform:scaleX(1.1885);">70</div>
<div class="a" style="left:1467px;top:585px;width:128.8px;height:109px;box-sizing:border-box;border:1.9px solid #f8f8f8;background:linear-gradient(#cececd 0,#cececd 50%,#cdcdcd 50%,#cdcdcd 100%);"></div>
<div class="t" style="left:1523.60px;top:698.84px;font-size:11.8px;line-height:11.8px;color:#ffffff;transform:scaleX(1.1885);">80</div>
<div class="a" style="left:1616px;top:585px;width:128.8px;height:109px;box-sizing:border-box;border:1.9px solid #f8f8f8;background:linear-gradient(#e6e7e7 0,#e6e7e7 50%,#e6e6e6 50%,#e6e6e6 100%);"></div>
<div class="t" style="left:1672.60px;top:698.84px;font-size:11.8px;line-height:11.8px;color:#ffffff;transform:scaleX(1.1885);">90</div>
<div class="a" style="left:1765px;top:585px;width:128.8px;height:109px;box-sizing:border-box;border:1.9px solid #f8f8f8;background:linear-gradient(#fffffc 0,#fffffc 50%,#ffffff 50%,#ffffff 100%);"></div>
<div class="t" style="left:1817.90px;top:698.84px;font-size:11.8px;line-height:11.8px;color:#ffffff;transform:scaleX(1.1682);">100</div>
<div class="t" style="left:255.3px;top:628.2px;font-size:13.3px;line-height:13.3px;color:#fff;transform:rotate(-90deg) scaleX(0.99);transform-origin:0 0;">Actual</div>
<div class="t" style="left:255.3px;top:689.2px;font-size:13.3px;line-height:13.3px;color:#fff;transform:rotate(-90deg) scaleX(0.96);transform-origin:0 0;">Target</div>
<div class="t" style="left:172.00px;top:764.63px;font-size:29px;line-height:29px;color:#f2f2f2;transform:scaleX(1.0973);">Current Reading</div>
<div class="t" style="left:172.00px;top:813.72px;font-size:23.7px;line-height:23.7px;color:#f2f2f2;transform:scaleX(1.1230);">x: 0.3142</div>
<div class="t" style="left:331.00px;top:813.72px;font-size:23.7px;line-height:23.7px;color:#f2f2f2;transform:scaleX(1.1488);">y: 0.3311</div>
<div class="t" style="left:172.00px;top:849.62px;font-size:23.7px;line-height:23.7px;color:#f2f2f2;transform:scaleX(1.1464);">u&#x27;: 0.1981</div>
<div class="t" style="left:331.00px;top:849.62px;font-size:23.7px;line-height:23.7px;color:#f2f2f2;transform:scaleX(1.1418);">v&#x27;: 0.4696</div>
<div class="t" style="left:172.00px;top:885.72px;font-size:23.7px;line-height:23.7px;color:#f2f2f2;transform:scaleX(1.1648);">cd/m²: 403.7535</div>
<div class="t" style="left:172.00px;top:921.82px;font-size:23.7px;line-height:23.7px;color:#f2f2f2;transform:scaleX(1.0871);">ΔE 2000: 1.1</div>
<div class="t" style="left:612.00px;top:740.73px;font-size:15.5px;line-height:15.5px;color:#d0d0d0;transform:scaleX(0.9475);">CIE 1931 xy</div>
<div class="a" style="left:537.0px;top:758.0px;width:267.5px;height:176.60000000000002px;
background:radial-gradient(ellipse 215px 175px at 125.0px 100.0px, rgba(255,255,255,1) 0%, rgba(255,255,255,0.88) 10%, rgba(255,255,255,0.5) 42%, rgba(255,255,255,0.2) 76%, rgba(255,255,255,0.1) 100%),
conic-gradient(from 0deg at 125.0px 100.0px, #c8ffa8 0deg, #f0ffa8 26deg, #ffeea0 48deg, #ffc890 68deg, #ff9088 95deg, #ff6090 125deg, #ff70c8 150deg, #ff88ff 178deg, #c8a0ff 205deg, #88a8ff 232deg, #70c8ff 252deg, #60f8ff 275deg, #58ffc8 300deg, #60ff98 325deg, #98ff90 345deg, #c8ffa8 360deg);"></div>
<div class="t" style="left:500.50px;top:802.33px;font-size:15.5px;line-height:15.5px;color:#dadada;transform:scaleX(1.0110);">0.34</div>
<div class="t" style="left:500.50px;top:871.83px;font-size:15.5px;line-height:15.5px;color:#dadada;transform:scaleX(1.0110);">0.32</div>
<div class="t" style="left:533.55px;top:943.73px;font-size:15.5px;line-height:15.5px;color:#dadada;transform:scaleX(1.0110);">0.29</div>
<div class="t" style="left:591.45px;top:943.73px;font-size:15.5px;line-height:15.5px;color:#dadada;">0.3</div>
<div class="t" style="left:640.35px;top:943.73px;font-size:15.5px;line-height:15.5px;color:#dadada;transform:scaleX(1.0110);">0.31</div>
<div class="t" style="left:693.75px;top:943.73px;font-size:15.5px;line-height:15.5px;color:#dadada;transform:scaleX(1.0110);">0.32</div>
<div class="t" style="left:747.15px;top:943.73px;font-size:15.5px;line-height:15.5px;color:#dadada;transform:scaleX(1.0110);">0.33</div>
<svg width="1920" height="1058"><clipPath id="cpc"><rect x="537.0" y="758.0" width="267.5" height="176.60000000000002"/></clipPath>
<path d="M569.2 935.2 Q 680 853.1 805 786.0" fill="none" stroke="#000" stroke-width="3.2" clip-path="url(#cpc)"/>
<rect x="537.0" y="758.0" width="267.5" height="176.60000000000002" fill="none" stroke="#9a9a9a" stroke-width="1.6"/>
<path d="M531.5 809.6 H537.0" stroke="#a6a6a6" stroke-width="1.3"/>
<path d="M531.5 879.1 H537.0" stroke="#a6a6a6" stroke-width="1.3"/>
<path d="M549.1 934.6 V940.1" stroke="#a6a6a6" stroke-width="1.3"/>
<path d="M602.5 934.6 V940.1" stroke="#a6a6a6" stroke-width="1.3"/>
<path d="M655.9 934.6 V940.1" stroke="#a6a6a6" stroke-width="1.3"/>
<path d="M709.3 934.6 V940.1" stroke="#a6a6a6" stroke-width="1.3"/>
<path d="M762.7 934.6 V940.1" stroke="#a6a6a6" stroke-width="1.3"/>
<rect x="662.6" y="838.2" width="14.6" height="14.2" fill="#fff" stroke="#000" stroke-width="1.6"/>
<circle cx="642.8" cy="860.0" r="4.4" fill="rgb(26,26,26)" stroke="#111" stroke-width="1"/>
<circle cx="668.7" cy="846.7" r="4.4" fill="rgb(51,51,51)" stroke="#111" stroke-width="1"/>
<circle cx="665.5" cy="842.9" r="4.4" fill="rgb(77,77,77)" stroke="#111" stroke-width="1"/>
<circle cx="679.9" cy="842.5" r="4.4" fill="rgb(102,102,102)" stroke="#111" stroke-width="1"/>
<circle cx="674.6" cy="842.9" r="4.4" fill="rgb(128,128,128)" stroke="#111" stroke-width="1"/>
<circle cx="674.6" cy="839.4" r="4.4" fill="rgb(153,153,153)" stroke="#111" stroke-width="1"/>
<circle cx="673.5" cy="837.6" r="4.4" fill="rgb(179,179,179)" stroke="#111" stroke-width="1"/>
<circle cx="675.7" cy="841.8" r="4.4" fill="rgb(204,204,204)" stroke="#111" stroke-width="1"/>
<circle cx="668.2" cy="847.4" r="4.4" fill="rgb(230,230,230)" stroke="#111" stroke-width="1"/>
<circle cx="678.3" cy="839.0" r="4.4" fill="rgb(255,255,255)" stroke="#111" stroke-width="1"/></svg>
<div class="a" style="left:816px;top:728px;width:909px;height:27px;background:linear-gradient(#303030 0,#222 46%,#181818 47%,#000 100%);"></div>
<div class="a" style="left:816px;top:728px;width:11px;height:27px;background:#000;"></div>
<div class="t" style="left:940.50px;top:736.14px;font-size:12.2px;line-height:12.2px;color:#f0f0f0;transform:scaleX(1.0316);">0</div>
<div class="t" style="left:1018.80px;top:736.14px;font-size:12.2px;line-height:12.2px;color:#f0f0f0;transform:scaleX(1.0316);">10</div>
<div class="t" style="left:1089.70px;top:736.14px;font-size:12.2px;line-height:12.2px;color:#f0f0f0;transform:scaleX(1.0316);">20</div>
<div class="t" style="left:1160.70px;top:736.14px;font-size:12.2px;line-height:12.2px;color:#f0f0f0;transform:scaleX(1.0316);">30</div>
<div class="t" style="left:1231.50px;top:736.14px;font-size:12.2px;line-height:12.2px;color:#f0f0f0;transform:scaleX(1.0316);">40</div>
<div class="t" style="left:1302.30px;top:736.14px;font-size:12.2px;line-height:12.2px;color:#f0f0f0;transform:scaleX(1.0316);">50</div>
<div class="t" style="left:1373.20px;top:736.14px;font-size:12.2px;line-height:12.2px;color:#f0f0f0;transform:scaleX(1.0316);">60</div>
<div class="t" style="left:1444.10px;top:736.14px;font-size:12.2px;line-height:12.2px;color:#f0f0f0;transform:scaleX(1.0316);">70</div>
<div class="t" style="left:1514.90px;top:736.14px;font-size:12.2px;line-height:12.2px;color:#f0f0f0;transform:scaleX(1.0316);">80</div>
<div class="t" style="left:1585.90px;top:736.14px;font-size:12.2px;line-height:12.2px;color:#f0f0f0;transform:scaleX(1.0316);">90</div>
<div class="t" style="left:1656.80px;top:736.14px;font-size:12.2px;line-height:12.2px;color:#f0f0f0;transform:scaleX(1.0562);">100</div>
<div class="a" style="left:827px;top:754.70px;width:898px;height:25.00px;background:#444444;"></div>
<div class="a" style="left:816px;top:754.70px;width:11px;height:25.00px;background:#2c2c2c;"></div>
<div class="t" style="left:830.60px;top:760.02px;font-size:15px;line-height:15px;color:#f4f4f4;transform:scaleX(0.8257);">x: CIE31</div>
<div class="t" style="left:940.50px;top:760.02px;font-size:15px;line-height:15px;color:#f4f4f4;transform:scaleX(0.8882);">0.2619</div>
<div class="t" style="left:1018.80px;top:760.02px;font-size:15px;line-height:15px;color:#f4f4f4;transform:scaleX(0.8882);">0.3075</div>
<div class="t" style="left:1089.70px;top:760.02px;font-size:15px;line-height:15px;color:#f4f4f4;transform:scaleX(0.8882);">0.3124</div>
<div class="t" style="left:1160.70px;top:760.02px;font-size:15px;line-height:15px;color:#f4f4f4;transform:scaleX(0.9103);">0.3118</div>
<div class="t" style="left:1231.50px;top:760.02px;font-size:15px;line-height:15px;color:#f4f4f4;transform:scaleX(0.8882);">0.3145</div>
<div class="t" style="left:1302.30px;top:760.02px;font-size:15px;line-height:15px;color:#f4f4f4;transform:scaleX(0.8882);">0.3135</div>
<div class="t" style="left:1373.20px;top:760.02px;font-size:15px;line-height:15px;color:#f4f4f4;transform:scaleX(0.8882);">0.3135</div>
<div class="t" style="left:1444.10px;top:760.02px;font-size:15px;line-height:15px;color:#f4f4f4;transform:scaleX(0.8882);">0.3133</div>
<div class="t" style="left:1514.90px;top:760.02px;font-size:15px;line-height:15px;color:#f4f4f4;transform:scaleX(0.8882);">0.3137</div>
<div class="t" style="left:1585.90px;top:760.02px;font-size:15px;line-height:15px;color:#f4f4f4;transform:scaleX(0.8882);">0.3123</div>
<div class="t" style="left:1656.80px;top:760.02px;font-size:15px;line-height:15px;color:#f4f4f4;transform:scaleX(0.8882);">0.3142</div>
<div class="a" style="left:827px;top:779.40px;width:898px;height:25.00px;background:#808080;"></div>
<div class="a" style="left:816px;top:779.40px;width:11px;height:25.00px;background:#3a3a3a;"></div>
<div class="t" style="left:830.60px;top:784.72px;font-size:15px;line-height:15px;color:#f4f4f4;transform:scaleX(0.8257);">y: CIE31</div>
<div class="t" style="left:940.50px;top:784.72px;font-size:15px;line-height:15px;color:#f4f4f4;transform:scaleX(0.8882);">0.2684</div>
<div class="t" style="left:1018.80px;top:784.72px;font-size:15px;line-height:15px;color:#f4f4f4;transform:scaleX(0.8882);">0.3250</div>
<div class="t" style="left:1089.70px;top:784.72px;font-size:15px;line-height:15px;color:#f4f4f4;transform:scaleX(0.8882);">0.3289</div>
<div class="t" style="left:1160.70px;top:784.72px;font-size:15px;line-height:15px;color:#f4f4f4;transform:scaleX(0.8882);">0.3300</div>
<div class="t" style="left:1231.50px;top:784.72px;font-size:15px;line-height:15px;color:#f4f4f4;transform:scaleX(0.8882);">0.3301</div>
<div class="t" style="left:1302.30px;top:784.72px;font-size:15px;line-height:15px;color:#f4f4f4;transform:scaleX(0.8882);">0.3300</div>
<div class="t" style="left:1373.20px;top:784.72px;font-size:15px;line-height:15px;color:#f4f4f4;transform:scaleX(0.8882);">0.3310</div>
<div class="t" style="left:1444.10px;top:784.72px;font-size:15px;line-height:15px;color:#f4f4f4;transform:scaleX(0.8882);">0.3315</div>
<div class="a" style="left:1512.5px;top:780.40px;width:69px;height:22.20px;background:#f6f6f6;border:1px solid #fff;box-sizing:border-box;"></div>
<div class="t" style="left:1514.90px;top:784.72px;font-size:15px;line-height:15px;color:#222;transform:scaleX(0.8882);">0.3303</div>
<div class="t" style="left:1585.90px;top:784.72px;font-size:15px;line-height:15px;color:#f4f4f4;transform:scaleX(0.8882);">0.3287</div>
<div class="t" style="left:1656.80px;top:784.72px;font-size:15px;line-height:15px;color:#f4f4f4;transform:scaleX(0.9103);">0.3311</div>
<div class="a" style="left:827px;top:804.10px;width:898px;height:25.00px;background:#444444;"></div>
<div class="a" style="left:816px;top:804.10px;width:11px;height:25.00px;background:#2c2c2c;"></div>
<div class="t" style="left:830.60px;top:809.42px;font-size:15px;line-height:15px;color:#f4f4f4;transform:scaleX(0.7496);">Y</div>
<div class="t" style="left:940.50px;top:809.42px;font-size:15px;line-height:15px;color:#f4f4f4;transform:scaleX(0.8882);">0.3696</div>
<div class="t" style="left:1018.80px;top:809.42px;font-size:15px;line-height:15px;color:#f4f4f4;transform:scaleX(0.8882);">4.3235</div>
<div class="t" style="left:1089.70px;top:809.42px;font-size:15px;line-height:15px;color:#f4f4f4;transform:scaleX(0.8889);">13.3195</div>
<div class="t" style="left:1160.70px;top:809.42px;font-size:15px;line-height:15px;color:#f4f4f4;transform:scaleX(0.8889);">28.9521</div>
<div class="t" style="left:1231.50px;top:809.42px;font-size:15px;line-height:15px;color:#f4f4f4;transform:scaleX(0.8889);">53.1335</div>
<div class="t" style="left:1302.30px;top:809.42px;font-size:15px;line-height:15px;color:#f4f4f4;transform:scaleX(0.8889);">86.4939</div>
<div class="t" style="left:1373.20px;top:809.42px;font-size:15px;line-height:15px;color:#f4f4f4;transform:scaleX(0.8895);">128.7966</div>
<div class="t" style="left:1444.10px;top:809.42px;font-size:15px;line-height:15px;color:#f4f4f4;transform:scaleX(0.8895);">178.3019</div>
<div class="t" style="left:1514.90px;top:809.42px;font-size:15px;line-height:15px;color:#f4f4f4;transform:scaleX(0.8895);">243.1592</div>
<div class="t" style="left:1585.90px;top:809.42px;font-size:15px;line-height:15px;color:#f4f4f4;transform:scaleX(0.8895);">318.0239</div>
<div class="t" style="left:1656.80px;top:809.42px;font-size:15px;line-height:15px;color:#f4f4f4;transform:scaleX(0.8895);">403.7535</div>
<div class="a" style="left:827px;top:828.80px;width:898px;height:25.00px;background:#808080;"></div>
<div class="a" style="left:816px;top:828.80px;width:11px;height:25.00px;background:#3a3a3a;"></div>
<div class="t" style="left:830.60px;top:834.12px;font-size:15px;line-height:15px;color:#f4f4f4;transform:scaleX(0.8904);">Target Y</div>
<div class="t" style="left:940.50px;top:834.12px;font-size:15px;line-height:15px;color:#f4f4f4;transform:scaleX(0.8882);">0.0000</div>
<div class="t" style="left:1018.80px;top:834.12px;font-size:15px;line-height:15px;color:#f4f4f4;transform:scaleX(0.8882);">4.1707</div>
<div class="t" style="left:1089.70px;top:834.12px;font-size:15px;line-height:15px;color:#f4f4f4;transform:scaleX(0.8889);">13.3662</div>
<div class="t" style="left:1160.70px;top:834.12px;font-size:15px;line-height:15px;color:#f4f4f4;transform:scaleX(0.8889);">29.1800</div>
<div class="t" style="left:1231.50px;top:834.12px;font-size:15px;line-height:15px;color:#f4f4f4;transform:scaleX(0.8889);">53.6460</div>
<div class="t" style="left:1302.30px;top:834.12px;font-size:15px;line-height:15px;color:#f4f4f4;transform:scaleX(0.8889);">87.1544</div>
<div class="t" style="left:1373.20px;top:834.12px;font-size:15px;line-height:15px;color:#f4f4f4;transform:scaleX(0.8895);">128.6144</div>
<div class="t" style="left:1444.10px;top:834.12px;font-size:15px;line-height:15px;color:#f4f4f4;transform:scaleX(0.8895);">179.7515</div>
<div class="t" style="left:1514.90px;top:834.12px;font-size:15px;line-height:15px;color:#f4f4f4;transform:scaleX(0.8895);">243.7974</div>
<div class="t" style="left:1585.90px;top:834.12px;font-size:15px;line-height:15px;color:#f4f4f4;transform:scaleX(0.8895);">319.4893</div>
<div class="t" style="left:1656.80px;top:834.12px;font-size:15px;line-height:15px;color:#f4f4f4;transform:scaleX(0.8895);">403.7535</div>
<div class="a" style="left:827px;top:853.50px;width:898px;height:25.00px;background:#444444;"></div>
<div class="a" style="left:816px;top:853.50px;width:11px;height:25.00px;background:#2c2c2c;"></div>
<div class="t" style="left:830.60px;top:858.82px;font-size:15px;line-height:15px;color:#f4f4f4;transform:scaleX(0.9129);">Gamma Log/Log</div>
<div class="t" style="left:940.50px;top:858.82px;font-size:15px;line-height:15px;color:#f4f4f4;transform:scaleX(0.8882);">1.2778</div>
<div class="t" style="left:1018.80px;top:858.82px;font-size:15px;line-height:15px;color:#f4f4f4;transform:scaleX(0.8882);">1.9870</div>
<div class="t" style="left:1089.70px;top:858.82px;font-size:15px;line-height:15px;color:#f4f4f4;transform:scaleX(0.9103);">2.1197</div>
<div class="t" style="left:1160.70px;top:858.82px;font-size:15px;line-height:15px;color:#f4f4f4;transform:scaleX(0.8882);">2.1769</div>
<div class="t" style="left:1231.50px;top:858.82px;font-size:15px;line-height:15px;color:#f4f4f4;transform:scaleX(0.8882);">2.2133</div>
<div class="t" style="left:1302.30px;top:858.82px;font-size:15px;line-height:15px;color:#f4f4f4;transform:scaleX(0.8882);">2.2354</div>
<div class="t" style="left:1373.20px;top:858.82px;font-size:15px;line-height:15px;color:#f4f4f4;transform:scaleX(0.8882);">2.2367</div>
<div class="t" style="left:1444.10px;top:858.82px;font-size:15px;line-height:15px;color:#f4f4f4;transform:scaleX(0.8882);">2.2736</div>
<div class="t" style="left:1514.90px;top:858.82px;font-size:15px;line-height:15px;color:#f4f4f4;transform:scaleX(0.8882);">2.2725</div>
<div class="t" style="left:1585.90px;top:858.82px;font-size:15px;line-height:15px;color:#f4f4f4;transform:scaleX(0.8882);">2.3131</div>
<div class="t" style="left:1656.80px;top:858.82px;font-size:15px;line-height:15px;color:#f4f4f4;transform:scaleX(0.8882);">2.2749</div>
<div class="a" style="left:827px;top:878.20px;width:898px;height:25.00px;background:#808080;"></div>
<div class="a" style="left:816px;top:878.20px;width:11px;height:25.00px;background:#3a3a3a;"></div>
<div class="t" style="left:830.60px;top:883.52px;font-size:15px;line-height:15px;color:#f4f4f4;transform:scaleX(0.7785);">CCT</div>
<div class="t" style="left:940.50px;top:883.52px;font-size:15px;line-height:15px;color:#f4f4f4;transform:scaleX(0.8902);">14180.0000</div>
<div class="t" style="left:1018.80px;top:883.52px;font-size:15px;line-height:15px;color:#f4f4f4;transform:scaleX(0.8899);">6834.0000</div>
<div class="t" style="left:1089.70px;top:883.52px;font-size:15px;line-height:15px;color:#f4f4f4;transform:scaleX(0.8899);">6523.0000</div>
<div class="t" style="left:1160.70px;top:883.52px;font-size:15px;line-height:15px;color:#f4f4f4;transform:scaleX(0.8899);">6544.0000</div>
<div class="t" style="left:1231.50px;top:883.52px;font-size:15px;line-height:15px;color:#f4f4f4;transform:scaleX(0.8899);">6399.0000</div>
<div class="t" style="left:1302.30px;top:883.52px;font-size:15px;line-height:15px;color:#f4f4f4;transform:scaleX(0.8899);">6456.0000</div>
<div class="t" style="left:1373.20px;top:883.52px;font-size:15px;line-height:15px;color:#f4f4f4;transform:scaleX(0.8899);">6449.0000</div>
<div class="t" style="left:1444.10px;top:883.52px;font-size:15px;line-height:15px;color:#f4f4f4;transform:scaleX(0.8899);">6455.0000</div>
<div class="t" style="left:1514.90px;top:883.52px;font-size:15px;line-height:15px;color:#f4f4f4;transform:scaleX(0.8899);">6439.0000</div>
<div class="t" style="left:1585.90px;top:883.52px;font-size:15px;line-height:15px;color:#f4f4f4;transform:scaleX(0.8899);">6529.0000</div>
<div class="t" style="left:1656.80px;top:883.52px;font-size:15px;line-height:15px;color:#f4f4f4;transform:scaleX(0.8899);">6408.0000</div>
<div class="a" style="left:827px;top:902.90px;width:898px;height:25.00px;background:#444444;"></div>
<div class="a" style="left:816px;top:902.90px;width:11px;height:25.00px;background:#2c2c2c;"></div>
<div class="t" style="left:830.60px;top:908.22px;font-size:15px;line-height:15px;color:#f4f4f4;transform:scaleX(0.8686);">ΔE 2000</div>
<div class="t" style="left:940.50px;top:908.22px;font-size:15px;line-height:15px;color:#f4f4f4;transform:scaleX(0.8882);">0.9832</div>
<div class="t" style="left:1018.80px;top:908.22px;font-size:15px;line-height:15px;color:#f4f4f4;transform:scaleX(0.8882);">0.6342</div>
<div class="t" style="left:1089.70px;top:908.22px;font-size:15px;line-height:15px;color:#f4f4f4;transform:scaleX(0.8882);">0.0821</div>
<div class="t" style="left:1160.70px;top:908.22px;font-size:15px;line-height:15px;color:#f4f4f4;transform:scaleX(0.8882);">0.6093</div>
<div class="t" style="left:1231.50px;top:908.22px;font-size:15px;line-height:15px;color:#f4f4f4;transform:scaleX(0.8882);">0.5210</div>
<div class="t" style="left:1302.30px;top:908.22px;font-size:15px;line-height:15px;color:#f4f4f4;transform:scaleX(0.8882);">0.3718</div>
<div class="t" style="left:1373.20px;top:908.22px;font-size:15px;line-height:15px;color:#f4f4f4;transform:scaleX(0.8882);">0.8755</div>
<div class="t" style="left:1444.10px;top:908.22px;font-size:15px;line-height:15px;color:#f4f4f4;transform:scaleX(0.8882);">1.3199</div>
<div class="t" style="left:1514.90px;top:908.22px;font-size:15px;line-height:15px;color:#f4f4f4;transform:scaleX(0.8882);">0.5867</div>
<div class="t" style="left:1585.90px;top:908.22px;font-size:15px;line-height:15px;color:#f4f4f4;transform:scaleX(0.8882);">0.2340</div>
<div class="t" style="left:1656.80px;top:908.22px;font-size:15px;line-height:15px;color:#f4f4f4;transform:scaleX(0.8882);">1.1029</div>
<div class="a" style="left:827px;top:927.60px;width:898px;height:25.00px;background:#808080;"></div>
<div class="a" style="left:816px;top:927.60px;width:11px;height:25.00px;background:#3a3a3a;"></div>
<div class="t" style="left:830.60px;top:932.92px;font-size:15px;line-height:15px;color:#f4f4f4;transform:scaleX(0.8037);">dEITP</div>
<div class="t" style="left:940.50px;top:932.92px;font-size:15px;line-height:15px;color:#f4f4f4;transform:scaleX(0.8889);">77.0907</div>
<div class="t" style="left:1018.80px;top:932.92px;font-size:15px;line-height:15px;color:#f4f4f4;transform:scaleX(0.8882);">2.7068</div>
<div class="t" style="left:1089.70px;top:932.92px;font-size:15px;line-height:15px;color:#f4f4f4;transform:scaleX(0.8882);">0.2697</div>
<div class="t" style="left:1160.70px;top:932.92px;font-size:15px;line-height:15px;color:#f4f4f4;transform:scaleX(0.8882);">0.9657</div>
<div class="t" style="left:1231.50px;top:932.92px;font-size:15px;line-height:15px;color:#f4f4f4;transform:scaleX(0.8882);">1.1697</div>
<div class="t" style="left:1302.30px;top:932.92px;font-size:15px;line-height:15px;color:#f4f4f4;transform:scaleX(0.8882);">0.7217</div>
<div class="t" style="left:1373.20px;top:932.92px;font-size:15px;line-height:15px;color:#f4f4f4;transform:scaleX(0.8882);">0.7876</div>
<div class="t" style="left:1444.10px;top:932.92px;font-size:15px;line-height:15px;color:#f4f4f4;transform:scaleX(0.8882);">1.2043</div>
<div class="t" style="left:1514.90px;top:932.92px;font-size:15px;line-height:15px;color:#f4f4f4;transform:scaleX(0.8882);">0.6844</div>
<div class="t" style="left:1585.90px;top:932.92px;font-size:15px;line-height:15px;color:#f4f4f4;transform:scaleX(0.8882);">0.4340</div>
<div class="t" style="left:1656.80px;top:932.92px;font-size:15px;line-height:15px;color:#f4f4f4;transform:scaleX(0.8882);">0.9979</div>
<div class="a" style="left:150px;top:1011px;width:1770px;height:47px;background:linear-gradient(#2e2e2e 0,#2e2e2e 2%,#4b4b4b 4%,#3c3c3c 50%,#2d2d2d);"></div>
<div class="a" style="left:151px;top:1012px;width:113px;height:46px;border-radius:4px 4px 0 0;background:linear-gradient(#868686,#747474 12%,#6a6a6a 60%,#5a5a5a);box-shadow:inset 0 1px 0 #a0a0a0, inset 1px 0 0 #8a8a8a, inset -1px 0 0 #505050;"></div>
<div class="a" style="left:155px;top:1015.5px;width:105px;height:26.5px;border-radius:3px;background:rgb(0,0,0);box-shadow:0 0 1.5px 0.5px rgba(30,30,30,0.9);"></div>
<div class="t" style="left:204.70px;top:1046.59px;font-size:8.2px;line-height:8.2px;color:#2a2a2a;font-weight:bold;transform:scaleX(1.0963);">0</div>
<div class="a" style="left:265px;top:1012px;width:113px;height:46px;border-radius:4px 4px 0 0;background:linear-gradient(#868686,#747474 12%,#6a6a6a 60%,#5a5a5a);box-shadow:inset 0 1px 0 #a0a0a0, inset 1px 0 0 #8a8a8a, inset -1px 0 0 #505050;"></div>
<div class="a" style="left:269px;top:1015.5px;width:105px;height:26.5px;border-radius:3px;background:rgb(26,26,26);box-shadow:0 0 1.5px 0.5px rgba(30,30,30,0.9);"></div>
<div class="t" style="left:316.45px;top:1046.59px;font-size:8.2px;line-height:8.2px;color:#2a2a2a;font-weight:bold;transform:scaleX(1.0415);">10</div>
<div class="a" style="left:379px;top:1012px;width:113px;height:46px;border-radius:4px 4px 0 0;background:linear-gradient(#868686,#747474 12%,#6a6a6a 60%,#5a5a5a);box-shadow:inset 0 1px 0 #a0a0a0, inset 1px 0 0 #8a8a8a, inset -1px 0 0 #505050;"></div>
<div class="a" style="left:383px;top:1015.5px;width:105px;height:26.5px;border-radius:3px;background:rgb(51,51,51);box-shadow:0 0 1.5px 0.5px rgba(30,30,30,0.9);"></div>
<div class="t" style="left:430.45px;top:1046.59px;font-size:8.2px;line-height:8.2px;color:#2a2a2a;font-weight:bold;transform:scaleX(1.0415);">20</div>
<div class="a" style="left:493px;top:1012px;width:113px;height:46px;border-radius:4px 4px 0 0;background:linear-gradient(#868686,#747474 12%,#6a6a6a 60%,#5a5a5a);box-shadow:inset 0 1px 0 #a0a0a0, inset 1px 0 0 #8a8a8a, inset -1px 0 0 #505050;"></div>
<div class="a" style="left:497px;top:1015.5px;width:105px;height:26.5px;border-radius:3px;background:rgb(77,77,77);box-shadow:0 0 1.5px 0.5px rgba(30,30,30,0.9);"></div>
<div class="t" style="left:544.45px;top:1046.59px;font-size:8.2px;line-height:8.2px;color:#2a2a2a;font-weight:bold;transform:scaleX(1.0415);">30</div>
<div class="a" style="left:607px;top:1012px;width:113px;height:46px;border-radius:4px 4px 0 0;background:linear-gradient(#868686,#747474 12%,#6a6a6a 60%,#5a5a5a);box-shadow:inset 0 1px 0 #a0a0a0, inset 1px 0 0 #8a8a8a, inset -1px 0 0 #505050;"></div>
<div class="a" style="left:611px;top:1015.5px;width:105px;height:26.5px;border-radius:3px;background:rgb(102,102,102);box-shadow:0 0 1.5px 0.5px rgba(30,30,30,0.9);"></div>
<div class="t" style="left:658.45px;top:1046.59px;font-size:8.2px;line-height:8.2px;color:#2a2a2a;font-weight:bold;transform:scaleX(1.0415);">40</div>
<div class="a" style="left:721px;top:1012px;width:113px;height:46px;border-radius:4px 4px 0 0;background:linear-gradient(#868686,#747474 12%,#6a6a6a 60%,#5a5a5a);box-shadow:inset 0 1px 0 #a0a0a0, inset 1px 0 0 #8a8a8a, inset -1px 0 0 #505050;"></div>
<div class="a" style="left:725px;top:1015.5px;width:105px;height:26.5px;border-radius:3px;background:rgb(128,128,128);box-shadow:0 0 1.5px 0.5px rgba(30,30,30,0.9);"></div>
<div class="t" style="left:772.45px;top:1046.59px;font-size:8.2px;line-height:8.2px;color:#2a2a2a;font-weight:bold;transform:scaleX(1.0415);">50</div>
<div class="a" style="left:835px;top:1012px;width:113px;height:46px;border-radius:4px 4px 0 0;background:linear-gradient(#868686,#747474 12%,#6a6a6a 60%,#5a5a5a);box-shadow:inset 0 1px 0 #a0a0a0, inset 1px 0 0 #8a8a8a, inset -1px 0 0 #505050;"></div>
<div class="a" style="left:839px;top:1015.5px;width:105px;height:26.5px;border-radius:3px;background:rgb(153,153,153);box-shadow:0 0 1.5px 0.5px rgba(30,30,30,0.9);"></div>
<div class="t" style="left:886.45px;top:1046.59px;font-size:8.2px;line-height:8.2px;color:#2a2a2a;font-weight:bold;transform:scaleX(1.0415);">60</div>
<div class="a" style="left:949px;top:1012px;width:113px;height:46px;border-radius:4px 4px 0 0;background:linear-gradient(#868686,#747474 12%,#6a6a6a 60%,#5a5a5a);box-shadow:inset 0 1px 0 #a0a0a0, inset 1px 0 0 #8a8a8a, inset -1px 0 0 #505050;"></div>
<div class="a" style="left:953px;top:1015.5px;width:105px;height:26.5px;border-radius:3px;background:rgb(179,179,179);box-shadow:0 0 1.5px 0.5px rgba(30,30,30,0.9);"></div>
<div class="t" style="left:1000.45px;top:1046.59px;font-size:8.2px;line-height:8.2px;color:#2a2a2a;font-weight:bold;transform:scaleX(1.0415);">70</div>
<div class="a" style="left:1063px;top:1012px;width:113px;height:46px;border-radius:4px 4px 0 0;background:linear-gradient(#868686,#747474 12%,#6a6a6a 60%,#5a5a5a);box-shadow:inset 0 1px 0 #a0a0a0, inset 1px 0 0 #8a8a8a, inset -1px 0 0 #505050;"></div>
<div class="a" style="left:1067px;top:1015.5px;width:105px;height:26.5px;border-radius:3px;background:rgb(204,204,204);box-shadow:0 0 1.5px 0.5px rgba(30,30,30,0.9);"></div>
<div class="t" style="left:1114.45px;top:1046.59px;font-size:8.2px;line-height:8.2px;color:#2a2a2a;font-weight:bold;transform:scaleX(1.0415);">80</div>
<div class="a" style="left:1177px;top:1012px;width:113px;height:46px;border-radius:4px 4px 0 0;background:linear-gradient(#868686,#747474 12%,#6a6a6a 60%,#5a5a5a);box-shadow:inset 0 1px 0 #a0a0a0, inset 1px 0 0 #8a8a8a, inset -1px 0 0 #505050;"></div>
<div class="a" style="left:1181px;top:1015.5px;width:105px;height:26.5px;border-radius:3px;background:rgb(230,230,230);box-shadow:0 0 1.5px 0.5px rgba(30,30,30,0.9);"></div>
<div class="t" style="left:1228.45px;top:1046.59px;font-size:8.2px;line-height:8.2px;color:#2a2a2a;font-weight:bold;transform:scaleX(1.0415);">90</div>
<div class="a" style="left:1291px;top:1012px;width:113px;height:46px;border-radius:4px 4px 0 0;background:linear-gradient(#1c1c1c,#262626 55%,#3a3a3a);box-shadow:inset 0 0 2px #111;"></div>
<div class="a" style="left:1295px;top:1015.5px;width:105px;height:26.5px;border-radius:3px;background:rgb(255,255,255);box-shadow:0 0 1.5px 0.5px rgba(30,30,30,0.9);"></div>
<div class="t" style="left:1339.95px;top:1046.59px;font-size:8.2px;line-height:8.2px;color:#ffffff;font-weight:bold;transform:scaleX(1.0598);">100</div>
<div class="a" style="left:1715px;top:1012px;width:169px;height:22px;background:linear-gradient(#8a8a8a,#6a6a6a);border-radius:3px 3px 0 0;"></div>
<div class="a" style="left:1748.7px;top:1012px;width:1px;height:22px;background:#4a4a4a;"></div>
<div class="a" style="left:1782.4px;top:1012px;width:1px;height:22px;background:#4a4a4a;"></div>
<div class="a" style="left:1816.1px;top:1012px;width:1px;height:22px;background:#4a4a4a;"></div>
<div class="a" style="left:1849.8px;top:1012px;width:1px;height:22px;background:#4a4a4a;"></div>
<div class="a" style="left:1884px;top:1012px;width:36px;height:22px;background:#2c2c2c;"></div>
<div class="a" style="left:1724.5px;top:1016px;width:15px;height:15px;border-radius:8px;background:rgba(60,60,60,0.45);"></div>
<div class="a" style="left:1758.2px;top:1016px;width:15px;height:15px;border-radius:8px;background:rgba(60,60,60,0.45);"></div>
<div class="a" style="left:1791.9px;top:1016px;width:15px;height:15px;border-radius:8px;background:rgba(60,60,60,0.45);"></div>
<div class="a" style="left:1825.6px;top:1016px;width:15px;height:15px;border-radius:8px;background:rgba(60,60,60,0.45);"></div>
<div class="a" style="left:1859.3px;top:1016px;width:15px;height:15px;border-radius:8px;background:rgba(60,60,60,0.45);"></div>
<div class="a" style="left:1678px;top:1026.7px;width:35px;height:32px;border-radius:4px 4px 0 0;background:linear-gradient(#7c7c7c,#646464 50%,#585858);box-shadow:inset 0 1px 0 #8c8c8c;"></div>
<div class="a" style="left:1684px;top:1031px;width:23px;height:23px;border-radius:4px;border:1.8px solid #1c1c1c;box-sizing:border-box;background:linear-gradient(#a8a8a8,#8c8c8c);"></div>
<div class="a" style="left:1689px;top:1036px;width:13px;height:13px;border-radius:1.5px;background:linear-gradient(#333,#000 50%);"></div>
<div class="a" style="left:1715px;top:1036px;width:101px;height:22px;border-radius:3px 0 0 0;background:linear-gradient(#c2c2c2,#a4a4a4 45%,#8e8e8e);box-shadow:inset 0 1px 0 #d4d4d4;"></div>
<div class="a" style="left:1817px;top:1036px;width:102px;height:22px;border-radius:0 3px 0 0;background:linear-gradient(#c2c2c2,#a4a4a4 45%,#8e8e8e);box-shadow:inset 0 1px 0 #d4d4d4;"></div>
<svg width="1920" height="1058">
<circle cx="1737.5" cy="1046.5" r="7" fill="#b0b0b0"/><circle cx="1898.5" cy="1046.5" r="7" fill="#b0b0b0"/>
<path d="M1737 1043 L1734 1046.5 L1737 1050 M1741 1043 L1738 1046.5 L1741 1050" stroke="#3a3a3a" stroke-width="1.1" fill="none"/>
<path d="M1896 1043 L1899 1046.5 L1896 1050 M1900 1043 L1903 1046.5 L1900 1050" stroke="#3a3a3a" stroke-width="1.1" fill="none"/>
</svg>
<div class="t" style="left:1757.50px;top:1037.26px;font-size:18.5px;line-height:18.5px;color:#2a2a2a;transform:scaleX(0.9239);">Back</div>
<div class="t" style="left:1837.50px;top:1037.26px;font-size:18.5px;line-height:18.5px;color:#2a2a2a;transform:scaleX(1.0253);">Next</div>
<svg width="1920" height="1058">
<path d="M1636 1001 L1667 1007 L1668 1025 L1638 1028Z" fill="rgba(60,58,60,0.55)"/>
<g fill="none" stroke-linejoin="miter" stroke-linecap="round">
<path d="M1640.4 1029.2 L1670.2 1026.5 L1669 1004 L1632.3 996.3 L1634.8 1034.3 L1656.7 1045.2 L1697.5 1032.3 L1674.6 1027.9" stroke="rgba(200,185,185,0.5)" stroke-width="5.8"/>
<path d="M1640.4 1029.2 L1670.2 1026.5 L1669 1004 L1632.3 996.3 L1634.8 1034.3 L1656.7 1045.2 L1697.5 1032.3 L1674.6 1027.9" stroke="rgba(136,42,50,0.92)" stroke-width="3.7"/>
</g>
<path d="M1641.4 1009.6 L1645.2 1006.4 L1654.3 1017.2 L1672.6 994.6 L1675.6 996.4 L1654.3 1025Z" fill="rgba(58,48,52,0.97)" stroke="rgba(235,235,235,0.85)" stroke-width="1"/>
<g font-family="Liberation Sans, sans-serif" font-weight="bold" font-size="27.2" stroke-linejoin="round">
<text x="1676.3" y="1025.6" textLength="145" lengthAdjust="spacingAndGlyphs" fill="none" stroke="rgba(215,190,195,0.55)" stroke-width="3.6">NOTEBOOK</text>
<text x="1676.3" y="1025.6" textLength="145" lengthAdjust="spacingAndGlyphs" fill="rgba(140,44,54,0.88)" stroke="rgba(140,44,54,0.88)" stroke-width="1.1">NOTEBOOK</text>
<text x="1823" y="1025.6" textLength="88.5" lengthAdjust="spacingAndGlyphs" fill="none" stroke="rgba(225,225,225,0.6)" stroke-width="3.6">CHECK</text>
<text x="1823" y="1025.6" textLength="88.5" lengthAdjust="spacingAndGlyphs" fill="rgba(42,42,42,0.92)" stroke="rgba(42,42,42,0.92)" stroke-width="1.1">CHECK</text>
</g>
</svg>
<div class="a" style="left:1551px;top:43.5px;width:107px;height:22.5px;border-radius:4px 4px 0 0;background:linear-gradient(#606060,#535353 50%,#494949);box-shadow:inset 0 1px 0 #6a6a6a;overflow:hidden;"><div style="position:absolute;left:0;top:1px;width:3.6px;height:22px;background:#18e018;"></div></div>
<div class="a" style="left:1631px;top:45.5px;width:1px;height:20.5px;background:#3c3c3c;"></div>
<div class="a" style="left:1632px;top:45.5px;width:1px;height:20.5px;background:#636363;"></div>
<div class="t" style="left:1557.20px;top:45.55px;font-size:8.9px;line-height:8.9px;color:#ffffff;transform:scaleX(0.9115);">X-Rite i1Pro 2</div>
<div class="t" style="left:1557.20px;top:55.85px;font-size:8.9px;line-height:8.9px;color:#ffffff;transform:scaleX(0.9366);">Direct View</div>
<svg width="1920" height="70"><circle cx="1617" cy="55" r="7" fill="#444"/><path d="M1613.7 53.6 H1620.3 L1617 57.4Z" fill="#fff"/></svg>
<div class="a" style="left:1662.5px;top:43.5px;width:98px;height:22.5px;border-radius:4px 4px 0 0;background:linear-gradient(#606060,#535353 50%,#494949);box-shadow:inset 0 1px 0 #6a6a6a;overflow:hidden;"><div style="position:absolute;left:0;top:1px;width:3.6px;height:22px;background:#f0e800;"></div></div>
<div class="t" style="left:1668.70px;top:45.55px;font-size:8.9px;line-height:8.9px;color:#ffffff;transform:scaleX(0.9220);">Source</div>
<svg width="1920" height="70"><circle cx="1748" cy="55" r="7" fill="#444"/><path d="M1744.7 53.6 H1751.3 L1748 57.4Z" fill="#fff"/></svg>
<div class="a" style="left:1764.5px;top:43.5px;width:107.3px;height:22.5px;border-radius:4px 4px 0 0;background:linear-gradient(#606060,#535353 50%,#494949);box-shadow:inset 0 1px 0 #6a6a6a;overflow:hidden;"><div style="position:absolute;left:0;top:1px;width:3.6px;height:22px;background:#f0e800;"></div></div>
<div class="t" style="left:1770.70px;top:45.55px;font-size:8.9px;line-height:8.9px;color:#ffffff;transform:scaleX(0.9122);">Direct Display Control</div>
<svg width="1920" height="70"><circle cx="1860" cy="55" r="7" fill="#444"/><path d="M1856.7 53.6 H1863.3 L1860 57.4Z" fill="#fff"/></svg>
<svg width="1920" height="70"><circle cx="1646.5" cy="54.8" r="9.6" fill="#0000ff" stroke="#e8e8ff" stroke-width="1"/></svg>
<div class="t" style="left:1640.25px;top:51.29px;font-size:7.6px;line-height:7.6px;color:#ffffff;font-weight:bold;transform:scaleX(0.9857);">239</div>
<div class="a" style="left:1874.1px;top:43.3px;width:25px;height:21.7px;border-radius:3.5px;background:linear-gradient(#9c9c9c,#7c7c7c 50%,#666666);box-shadow:inset 0 0 0 1px rgba(200,200,200,0.75), 0 0 0 0.7px #1c1c1c;"></div>
<div class="a" style="left:1900.3px;top:43.3px;width:25px;height:21.7px;border-radius:3.5px;background:linear-gradient(#9c9c9c,#7c7c7c 50%,#666666);box-shadow:inset 0 0 0 1px rgba(200,200,200,0.75), 0 0 0 0.7px #1c1c1c;"></div>
<svg width="1920" height="70"><defs><linearGradient id="gcg" x1="0" x2="0" y1="0" y2="1"><stop offset="0" stop-color="#6c6c6c"/><stop offset="1" stop-color="#868686"/></linearGradient></defs><circle cx="1886.9" cy="54.1" r="7" fill="url(#gcg)"/><polygon points="1886.14,49.06 1887.66,49.06 1887.57,50.26 1889.14,50.91 1889.93,50.00 1891.00,51.07 1890.09,51.86 1890.74,53.43 1891.94,53.34 1891.94,54.86 1890.74,54.77 1890.09,56.34 1891.00,57.13 1889.93,58.20 1889.14,57.29 1887.57,57.94 1887.66,59.14 1886.14,59.14 1886.23,57.94 1884.66,57.29 1883.87,58.20 1882.80,57.13 1883.71,56.34 1883.06,54.77 1881.86,54.86 1881.86,53.34 1883.06,53.43 1883.71,51.86 1882.80,51.07 1883.87,50.00 1884.66,50.91 1886.23,50.26" fill="#f4f4f4"/><circle cx="1886.9" cy="54.1" r="1.9" fill="#7a7a7a"/><circle cx="1910.3" cy="54.1" r="7" fill="url(#gcg)"/><path d="M1912.3 50 V57.2 L1908 53.6Z" fill="#fff"/></svg>
</div></body></html>
